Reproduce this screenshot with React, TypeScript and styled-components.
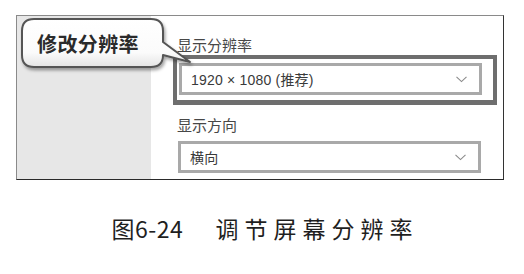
import React from "react"
import styled, { createGlobalStyle } from "styled-components"

const GlobalStyle = createGlobalStyle`
  html, body {
    margin: 0;
    padding: 0;
    background: #ffffff;
  }
  body {
    font-family: "Noto Sans CJK SC", "Noto Sans", sans-serif;
    width: 524px;
    height: 274px;
    overflow: hidden;
  }
`

const cjk = `"Noto Sans CJK SC", "Noto Sans", sans-serif`

const Page = styled.div`
  padding-top: 15px;
`

const Frame = styled.div`
  position: relative;
  box-sizing: border-box;
  margin-left: 16px;
  width: 488px;
  height: 165px;
  display: grid;
  grid-template-columns: 134px 1fr;
  border-top: 1px solid #8a8a8a;
  border-left: 1px solid #8a8a8a;
  border-right: 1px solid #333333;
  border-bottom: 1px solid #2a2a2a;
`

const SidePanel = styled.div`
  background: #e7e7e7;
`

const Settings = styled.div`
  display: flex;
  flex-direction: column;
  padding: 19px 0 6px 22px;
  background: #ffffff;
`

const Label = styled.div<{ $gap?: number }>`
  font-family: ${cjk};
  font-size: 15px;
  line-height: 20px;
  height: 20px;
  color: #474747;
  margin: ${(p) => p.$gap ?? 0}px 0 0 4px;
`

const Highlight = styled.div`
  box-sizing: border-box;
  width: 324px;
  height: 50px;
  border: 4px solid #6e6e6e;
  border-bottom-width: 5px;
  padding: 4px 0 0 2px;
`

const Select = styled.div<{ $gap?: number; $shift?: number }>`
  box-sizing: border-box;
  width: 303px;
  height: 32px;
  margin: ${(p) => p.$gap ?? 0}px 0 0 ${(p) => p.$shift ?? 0}px;
  border: 3px solid #a9a9a9;
  display: flex;
  align-items: center;
  justify-content: space-between;
  padding: 0 12px 0 9px;
  background: #ffffff;
`

const Value = styled.span`
  font-family: "Liberation Sans", ${cjk};
  font-size: 14px;
  color: #3a3a3a;
  letter-spacing: 0.2px;
`

const Chevron = () => (
  <svg width="11" height="7" viewBox="0 0 11 7">
    <path d="M0.5 0.8 L5.5 5.6 L10.5 0.8" fill="none" stroke="#8a8a8a" strokeWidth="1.1" />
  </svg>
)

const Callout = styled.div`
  position: absolute;
  left: 3px;
  top: 1px;
  width: 176px;
  height: 58px;
`

const BubbleArt = styled.svg`
  position: absolute;
  left: 0;
  top: 0;
`

const CalloutText = styled.span`
  position: absolute;
  left: 17px;
  top: 14px;
  font-family: ${cjk};
  font-weight: 700;
  font-size: 20px;
  line-height: 26px;
  color: #2b2b2b;
  letter-spacing: 0.4px;
`

const Bubble = () => (
  <BubbleArt width="176" height="58" viewBox="0 0 176 58">
    <defs>
      <linearGradient id="bubbleFill" x1="0" y1="0" x2="0" y2="1">
        <stop offset="0" stopColor="#ffffff" />
        <stop offset="0.7" stopColor="#fbfbfb" />
        <stop offset="1" stopColor="#e4e4e4" />
      </linearGradient>
      <filter id="bubbleShadow" x="-10%" y="-10%" width="130%" height="140%">
        <feDropShadow dx="1.5" dy="2.5" stdDeviation="1.6" floodColor="#000" floodOpacity="0.35" />
      </filter>
    </defs>
    <path
      d="M14 2 H131 Q143 2 143 14 V25 L170 45 L143 38 Q143 50 131 50 H14 Q2 50 2 38 V14 Q2 2 14 2 Z"
      fill="url(#bubbleFill)"
      stroke="#555555"
      strokeWidth="2"
      strokeLinejoin="round"
      filter="url(#bubbleShadow)"
    />
  </BubbleArt>
)

const Caption = styled.div`
  display: flex;
  justify-content: center;
  align-items: baseline;
  gap: 32px;
  margin-top: 34px;
  font-family: ${cjk};
  font-size: 23px;
  line-height: 28px;
  color: #1f1f1f;
  font-weight: 400;
`

const FigNo = styled.span`
  letter-spacing: 0.5px;
`

const FigTitle = styled.span`
  letter-spacing: 6px;
  margin-right: -6px;
`

export default function App() {
  return (
    <>
      <GlobalStyle />
      <Page>
        <Frame>
          <SidePanel />
          <Settings>
            <Label>显示分辨率</Label>
            <Highlight>
              <Select>
                <Value>1920 × 1080 (推荐)</Value>
                <Chevron />
              </Select>
            </Highlight>
            <Label $gap={10}>显示方向</Label>
            <Select $gap={6} $shift={5}>
              <Value>横向</Value>
              <Chevron />
            </Select>
          </Settings>
          <Callout>
            <Bubble />
            <CalloutText>修改分辨率</CalloutText>
          </Callout>
        </Frame>
        <Caption>
          <FigNo>图6-24</FigNo>
          <FigTitle>调节屏幕分辨率</FigTitle>
        </Caption>
      </Page>
    </>
  )
}
